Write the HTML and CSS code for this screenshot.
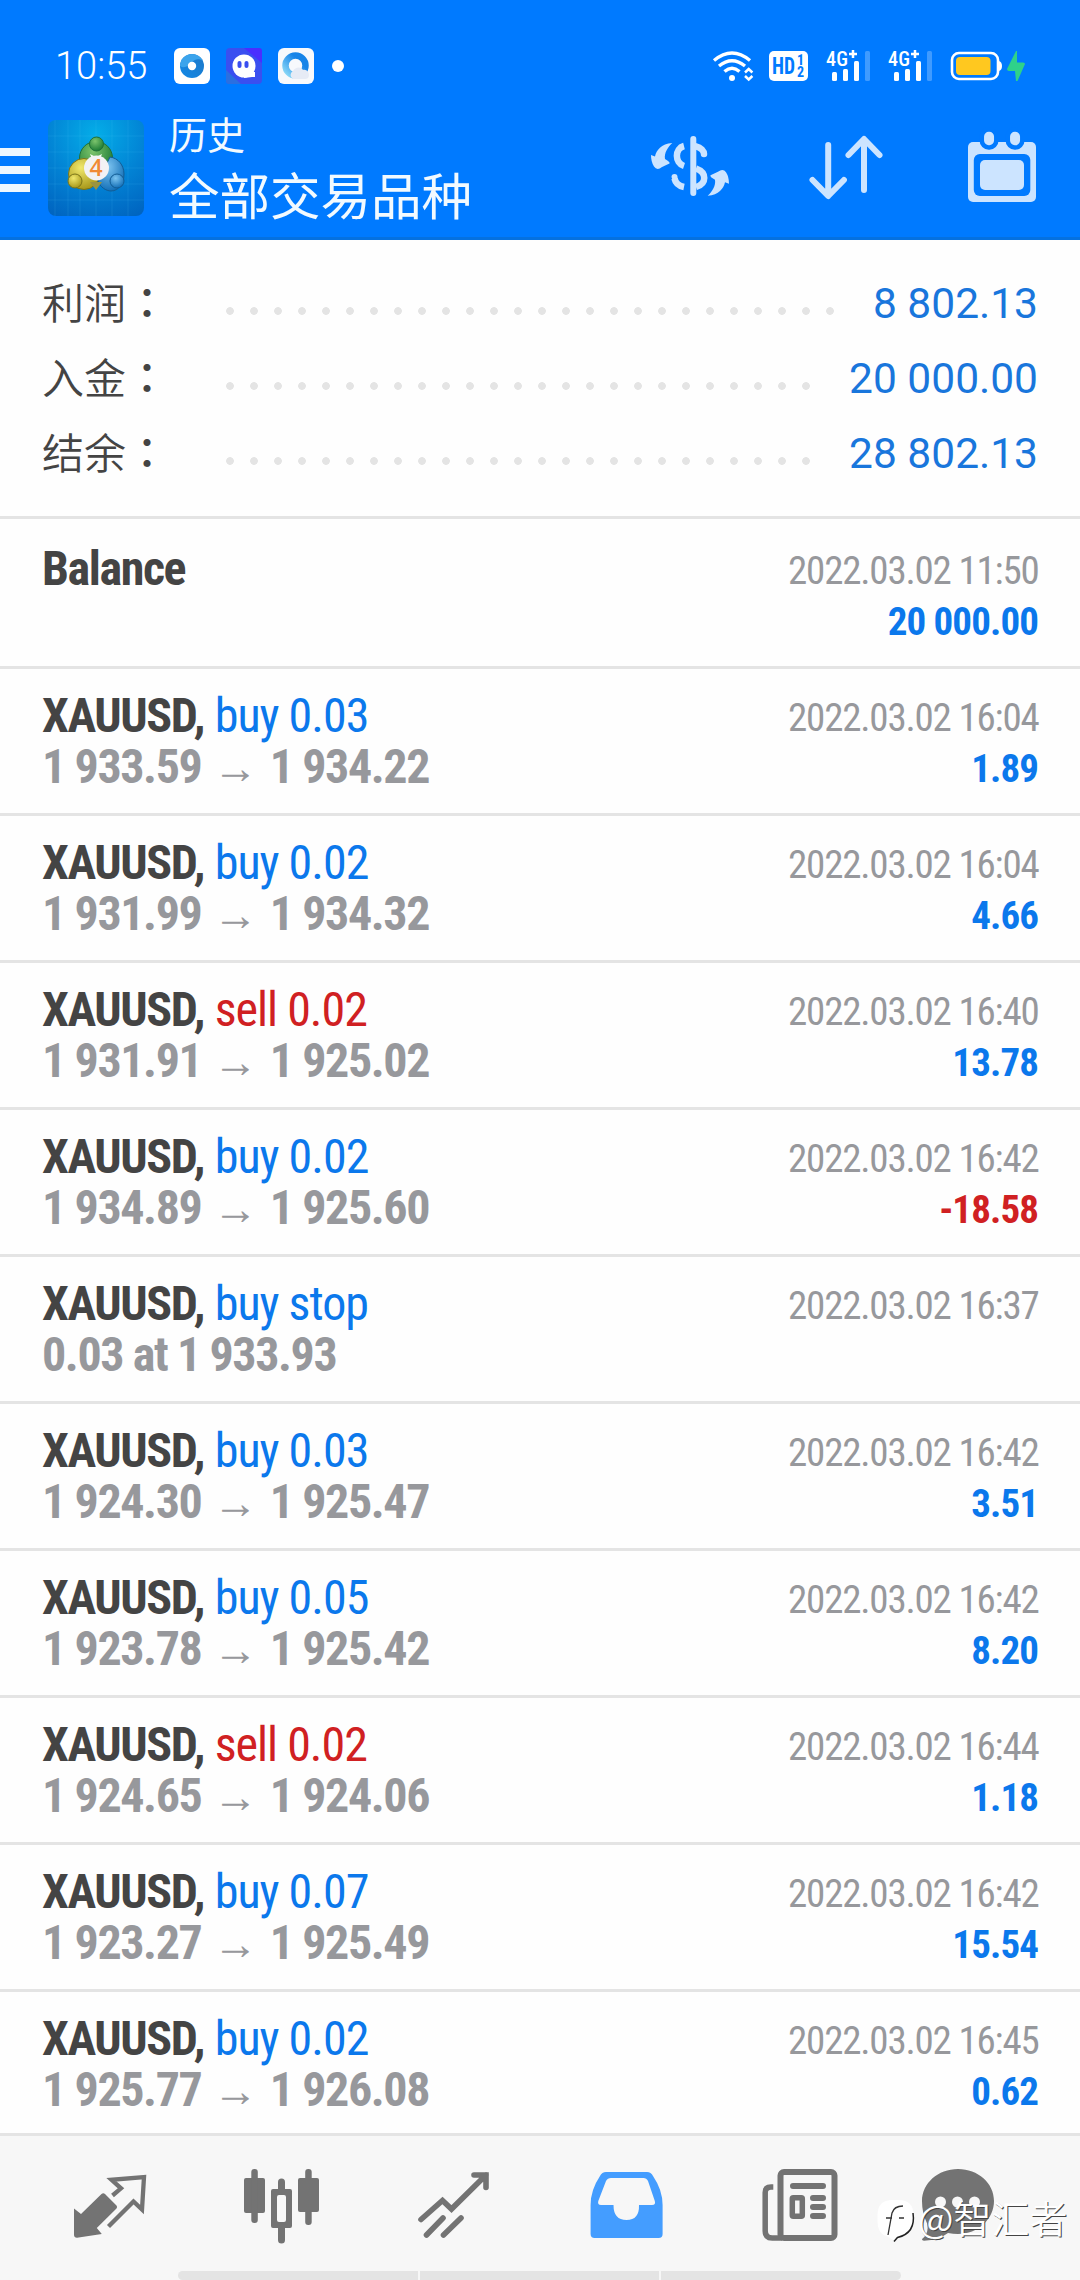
FILE: index.html
```html
<!DOCTYPE html>
<html lang="zh-CN">
<head>
<meta charset="utf-8">
<title>历史</title>
<link rel="stylesheet" href="styles.css">
</head>
<body>
<div class="screen">
  <header class="header">
    <div class="status">
      <span class="clock">10:55</span>
      <div class="notices">
        <svg width="36" height="36" viewBox="0 0 36 36"><defs><linearGradient id="ring" x1="1" y1="0" x2="0" y2="1"><stop offset="0" stop-color="#1d78c8"/><stop offset="1" stop-color="#1389e6"/></linearGradient></defs><rect width="36" height="36" rx="6" fill="#fff"/><circle cx="18" cy="18" r="12" fill="url(#ring)"/><path d="M6 18a12 12 0 0 1 12-12c5 0 9 3 11 7-4-3-8-2-11 1-3 4-8 7-12 4z" fill="#3ba4ec"/><circle cx="18" cy="18" r="4.2" fill="#fff"/></svg>
        <svg width="36" height="36" viewBox="0 0 36 36"><rect width="36" height="36" rx="4" fill="#3a4ff0"/><path d="M33 0h-15l18 15V3a3 3 0 0 0-3-3z" fill="#4a2eff"/><path d="M0 22v11a3 3 0 0 0 3 3h12z" fill="#2b6fe0"/><circle cx="18" cy="18" r="11.5" fill="#fff"/><path d="M18 24h11v5h-3l-8 1z" fill="#fff"/><rect x="11.5" y="13" width="4" height="7" rx="2" fill="#3a4ff0"/><rect x="18.5" y="13" width="4" height="7" rx="2" fill="#3a4ff0"/></svg>
        <svg width="36" height="36" viewBox="0 0 36 36"><defs><linearGradient id="q" x1="1" y1="0" x2="0" y2="1"><stop offset="0.3" stop-color="#1784e8"/><stop offset="1" stop-color="#8fdcf8"/></linearGradient></defs><rect width="36" height="36" rx="6" fill="#f7f9fc"/><circle cx="17.5" cy="17.5" r="10" fill="none" stroke="url(#q)" stroke-width="6.5"/><path d="M15 31a4.500 4.500 0 0 1 0-8c2-4 8-5 10-1 4-1 6 3 6 5 0 3-2 4-4 4z" fill="#e6ebf5"/></svg>
        <i class="more"></i>
      </div>
      <div class="signals">
        <svg width="42" height="32" viewBox="712 50 42 32"><g fill="none" stroke="#fff" stroke-width="3.400"><path d="M714 60.500Q732 45.500 750 60.500"/><path d="M719 66Q732 55.500 745 66"/><path d="M724.500 71.500Q732 65 739.500 71.500"/></g><circle cx="732" cy="78" r="3" fill="#fff"/><g fill="none" stroke="#fff" stroke-width="2.500"><path d="M745 72.500l3.700-3.500 3.700 3.500M745 76l3.700 3.500 3.700-3.500"/></g></svg>
        <svg class="hd" width="39" height="30" viewBox="0 0 39 30"><rect width="39" height="30" rx="5" fill="#fff"/><g fill="#007aff"><text x="3" y="23" font-size="23" textLength="23" lengthAdjust="spacingAndGlyphs">HD</text><text x="28" y="14" font-size="14">1</text><text x="28" y="26" font-size="14">2</text></g></svg>
        <svg class="cell" width="45" height="32" viewBox="825 50 45 32"><text x="826" y="66" font-size="20" fill="#fff" textLength="22">4G</text><path d="M849 54h8M853 50v8" stroke="#fff" stroke-width="2.500"/><g fill="#fff"><rect x="832" y="72" width="5" height="9" rx="1.500"/><rect x="843" y="69" width="5" height="12" rx="1.500"/><rect x="854" y="61" width="5" height="20" rx="1.500"/><rect x="865" y="51" width="5" height="30" rx="1.500" opacity=".25"/></g></svg>
        <svg class="cell" width="45" height="32" viewBox="825 50 45 32"><text x="826" y="66" font-size="20" fill="#fff" textLength="22">4G</text><path d="M849 54h8M853 50v8" stroke="#fff" stroke-width="2.500"/><g fill="#fff"><rect x="832" y="72" width="5" height="9" rx="1.500"/><rect x="843" y="69" width="5" height="12" rx="1.500"/><rect x="854" y="61" width="5" height="20" rx="1.500"/><rect x="865" y="51" width="5" height="30" rx="1.500" opacity=".25"/></g></svg>
        <svg width="76" height="32" viewBox="950 50 76 32"><rect x="952" y="53" width="46" height="26" rx="7" fill="none" stroke="#fff" stroke-width="2.600"/><path d="M999 61q3 1 3 5t-3 5z" fill="#fff"/><rect x="956" y="57" width="34.500" height="18" rx="4" fill="#ffc81f"/><path d="M1016 51l-9 18q0 2 2 2h6l1 10h1.500l7.500-17q0-1.500-2-1.500h-6v-11.500z" fill="#2fd18a"/></svg>
      </div>
    </div>
    <div class="appbar">
      <svg class="menu" width="30" height="44" viewBox="0 0 30 44" fill="#eef7ff"><path d="M0 0h30v8H0zM0 18h30v8H0zM0 36h30v8H0z"/></svg>
      <svg class="logo" width="96" height="96" viewBox="48 120 96 96">
        <defs>
          <radialGradient id="bg" cx=".5" cy=".15" r=".95"><stop offset="0" stop-color="#04ade8"/><stop offset=".55" stop-color="#0282d4"/><stop offset="1" stop-color="#0064c0"/></radialGradient>
          <radialGradient id="gr" cx=".4" cy=".3" r=".7"><stop offset="0" stop-color="#7cc46c"/><stop offset="1" stop-color="#1d7c35"/></radialGradient>
          <radialGradient id="ye" cx=".4" cy=".3" r=".7"><stop offset="0" stop-color="#f0e86c"/><stop offset="1" stop-color="#a8981a"/></radialGradient>
          <radialGradient id="bl" cx=".4" cy=".3" r=".7"><stop offset="0" stop-color="#7cc4f0"/><stop offset="1" stop-color="#1470b8"/></radialGradient>
        </defs>
        <rect x="48" y="120" width="96" height="96" rx="8" fill="url(#bg)"/>
        <path d="M55 120v96M68 120v96M80 120v96M96 120v96M112 120v96M128 120v96M48 136h96M48 152h96M48 168h96M48 184h96M48 200h96" stroke="#5cc8ff" stroke-opacity=".13" fill="none"/>
        <circle cx="96" cy="158" r="16.500" fill="url(#gr)" stroke="#1f7038"/>
        <circle cx="84" cy="174" r="15.500" fill="url(#ye)" stroke="#7a7418"/>
        <path d="M98 181c2 6 8 10 13 10 8 0 13-8 13-17s-6-16-14-17z" fill="url(#bl)" stroke="#125c94"/>
        <path d="M90 182h12l-6 8z" fill="#9a9440"/>
        <circle cx="75" cy="181" r="7" fill="url(#ye)" stroke="#7a7418"/>
        <circle cx="117" cy="181" r="7" fill="url(#bl)" stroke="#125c94"/>
        <circle cx="96.500" cy="144" r="7" fill="url(#gr)" stroke="#1f7038"/>
        <path d="M90 154l6 3 6-3-2 5h-8z" fill="#f2fff2"/>
        <circle cx="96.500" cy="168" r="12.500" fill="#f2f2f4"/>
        <text class="four" x="96" y="176" font-size="23" text-anchor="middle" fill="#f08a34">4</text>
      </svg>
      <div class="titles"><div class="sub">历史</div><div class="main">全部交易品种</div></div>
      <div class="actions">
        <svg width="156" height="90" viewBox="612 122 156 90"><rect x="690.300" y="136" width="6" height="60" rx="3" fill="#cce4ff"/><g fill="none" stroke="#cce4ff" stroke-width="6.500"><path d="M684 146C674.500 148.500 674.500 163 684 166"/><path d="M696 146.300C701 147.500 704 151 704 154" stroke-linecap="round"/><path d="M696 168.500C707 172.500 707 183.500 696 187"/><path d="M674.500 178.500C675.500 183 679 186 684 187"/></g><path d="M671.500 177a3 3 0 0 1 6 0v3h-5z" fill="#cce4ff"/><g fill="#cce4ff"><path id="turn" d="M672.300 143C661 144 656.500 150 655 156.500L651 155q0 7 3 11.500t8 0.500l7.500-3.500q1-1.500-4.500-4.500C664 153 668 147 672.300 143z"/><use href="#turn" transform="rotate(180 690 169.400)"/></g></svg>
        <svg width="156" height="90" viewBox="768 122 156 90" fill="none" stroke="#cce4ff" stroke-width="6" stroke-linecap="round" stroke-linejoin="round"><path d="M828.200 145v50M812.500 180l15.700 16 15.700-16M864 190v-50M848.500 155l15.500-16 15.500 16"/></svg>
        <svg width="156" height="90" viewBox="924 122 156 90"><rect x="968" y="142" width="68" height="60" rx="5" fill="#cce4ff"/><rect x="973.800" y="154" width="56.500" height="42" rx="6" fill="#007aff"/><rect x="980" y="160" width="44" height="30" rx="5" fill="#cce4ff"/><g fill="#cce4ff" stroke="#007aff" stroke-width="4.500"><rect x="981.800" y="129.500" width="14.500" height="18" rx="7"/><rect x="1007.800" y="129.500" width="14.500" height="18" rx="7"/></g></svg>
      </div>
    </div>
  </header>

  <section class="summary">
    <div class="sum"><span class="label">利润<b lang="zh-TW">：</b></span><i class="dots wide"></i><span class="value">8 802.13</span></div>
    <div class="sum"><span class="label">入金<b lang="zh-TW">：</b></span><i class="dots"></i><span class="value">20 000.00</span></div>
    <div class="sum"><span class="label">结余<b lang="zh-TW">：</b></span><i class="dots"></i><span class="value">28 802.13</span></div>
  </section>

  <main class="list">
    <div class="row first"><div class="deal"><div class="name">Balance</div></div><div class="info"><div class="date">2022.03.02 11:50</div><div class="profit">20 000.00</div></div></div>
    <div class="row"><div class="deal"><div class="name">XAUUSD, <span class="buy">buy 0.03</span></div><div class="price">1 933.59 <i>→</i> 1 934.22</div></div><div class="info"><div class="date">2022.03.02 16:04</div><div class="profit">1.89</div></div></div>
    <div class="row"><div class="deal"><div class="name">XAUUSD, <span class="buy">buy 0.02</span></div><div class="price">1 931.99 <i>→</i> 1 934.32</div></div><div class="info"><div class="date">2022.03.02 16:04</div><div class="profit">4.66</div></div></div>
    <div class="row"><div class="deal"><div class="name">XAUUSD, <span class="sell">sell 0.02</span></div><div class="price">1 931.91 <i>→</i> 1 925.02</div></div><div class="info"><div class="date">2022.03.02 16:40</div><div class="profit">13.78</div></div></div>
    <div class="row"><div class="deal"><div class="name">XAUUSD, <span class="buy">buy 0.02</span></div><div class="price">1 934.89 <i>→</i> 1 925.60</div></div><div class="info"><div class="date">2022.03.02 16:42</div><div class="profit loss">-18.58</div></div></div>
    <div class="row"><div class="deal"><div class="name">XAUUSD, <span class="buy">buy stop</span></div><div class="price">0.03 at 1 933.93</div></div><div class="info"><div class="date">2022.03.02 16:37</div></div></div>
    <div class="row"><div class="deal"><div class="name">XAUUSD, <span class="buy">buy 0.03</span></div><div class="price">1 924.30 <i>→</i> 1 925.47</div></div><div class="info"><div class="date">2022.03.02 16:42</div><div class="profit">3.51</div></div></div>
    <div class="row"><div class="deal"><div class="name">XAUUSD, <span class="buy">buy 0.05</span></div><div class="price">1 923.78 <i>→</i> 1 925.42</div></div><div class="info"><div class="date">2022.03.02 16:42</div><div class="profit">8.20</div></div></div>
    <div class="row"><div class="deal"><div class="name">XAUUSD, <span class="sell">sell 0.02</span></div><div class="price">1 924.65 <i>→</i> 1 924.06</div></div><div class="info"><div class="date">2022.03.02 16:44</div><div class="profit">1.18</div></div></div>
    <div class="row"><div class="deal"><div class="name">XAUUSD, <span class="buy">buy 0.07</span></div><div class="price">1 923.27 <i>→</i> 1 925.49</div></div><div class="info"><div class="date">2022.03.02 16:42</div><div class="profit">15.54</div></div></div>
    <div class="row last"><div class="deal"><div class="name">XAUUSD, <span class="buy">buy 0.02</span></div><div class="price">1 925.77 <i>→</i> 1 926.08</div></div><div class="info"><div class="date">2022.03.02 16:45</div><div class="profit">0.62</div></div></div>
  </main>

  <footer class="footer">
    <nav class="tabs">
      <svg width="172" height="135" viewBox="24 2136 172 135"><path d="M74 2208.500l7 5.500L101.500 2194q1.800-1.500 3.500 0L116.500 2205.500q1.200 1.500 0 3L96.800 2228l5 6L77 2237.800q-3 0-3-3z" fill="#737373"/><path d="M112.500 2195.500L121 2188.300 111.500 2179.800 144 2177 142 2209.500 133.500 2201.500 108.500 2226.500" fill="none" stroke="#737373" stroke-width="4.300"/></svg>
      <svg width="172" height="135" viewBox="196 2136 172 135"><g fill="#737373"><rect x="244" y="2178" width="21" height="35" rx="2"/><rect x="251.300" y="2169" width="6.500" height="54" rx="3"/><path fill-rule="evenodd" d="M273 2189h17a2 2 0 0 1 2 2v35a2 2 0 0 1-2 2h-17a2 2 0 0 1-2-2v-35a2 2 0 0 1 2-2zm6 6q-2 0-2 2v23q0 2 2 2h5q2 0 2-2v-23q0-2-2-2z"/><path d="M278 2190v-8a3.300 3.300 0 0 1 7 0v8zM278 2227v13a3.300 3.300 0 0 0 7 0v-13z"/><rect x="298" y="2178" width="21" height="34" rx="2"/><rect x="305.200" y="2169" width="6.500" height="56" rx="3"/></g></svg>
      <svg width="172" height="135" viewBox="368 2136 172 135" fill="none" stroke="#737373" stroke-width="5.600" stroke-linecap="round"><path d="M421 2219.500L442.500 2200.500 451.500 2209 486 2175M474 2175h12v12.500"/><path d="M426.500 2235L443 2218M443.500 2235L461 2218"/></svg>
      <svg width="172" height="135" viewBox="540 2136 172 135"><path fill-rule="evenodd" fill="#449dff" d="M606 2172h41q4 0 6 4 9.600 14 9.600 29v29q0 4-4 4h-64q-4 0-4-4v-29q0-15 9.400-29 2-4 6-4zM611 2178q-3.500 0-5 3L598.300 2201q-1 4 2.700 4h12.500q0 15 13 15t12.500-15h13q4 0 2.800-4L648 2181q-1.500-3-4.500-3z"/></svg>
      <svg width="172" height="135" viewBox="712 2136 172 135" fill="none" stroke="#737373"><rect x="780.500" y="2172" width="54" height="66" rx="3.500" stroke-width="6"/><path d="M773.300 2187H771q-5.800 0-5.800 5.500v38.500q0 7 7 7h10" stroke-width="5.500"/><path d="M793 2186h30M813 2198h10M813 2207h10M813 2216h10" stroke-width="6" stroke-linecap="round"/><rect x="792.300" y="2197.800" width="10" height="18.400" rx="1" stroke-width="5.500"/></svg>
      <svg width="172" height="135" viewBox="884 2136 172 135"><path fill="#737373" d="M958 2169c20 0 36 14 36 32s-16 33-36 33q-5 0-10-1-9 7-24 7.700-4-1 0-3.500 5-5 3-14-5-10-5-22c0-18 16-32.200 36-32.200z"/><g fill="#f7f7f7"><circle cx="940.500" cy="2202" r="5.500"/><circle cx="957.500" cy="2202" r="5.500"/><circle cx="974.500" cy="2202" r="5.500"/></g></svg>
    </nav>
    <div class="scroll"><i></i><i></i><i></i></div>
  </footer>
  <div class="watermark">
    <svg width="40" height="46" viewBox="876 2199 40 46"><path d="M895 2242l3-3c10-3 15.500-8 15.500-19v-4q0-15-15-15h-6q-15 0-15 15v6q0 10 6 14l3 1z" fill="#fff"/><path d="M913 2214q3 20-15.500 24.500l-3.500 4" fill="none" stroke="#222" stroke-width="1.500"/><path d="M888 2236l4-22q2-7 11-7M886 2219h6M899 2219h5" fill="none" stroke="#333" stroke-width="1.300"/></svg>
    <span>@智汇者</span>
  </div>
</div>
</body>
</html>
```
FILE: styles.css
```css
* { box-sizing: border-box; }
body { margin: 0; background: #fff; font-family: Roboto, "Noto Sans CJK SC", sans-serif; }
svg { display: block; flex: none; overflow: visible; }
.screen { position: relative; width: 1080px; height: 2280px; display: flex; flex-direction: column; background: #fefefe; overflow: hidden; }

.header { flex: none; height: 240px; background: #007aff; border-bottom: 3px solid #0571e0; }
.status { display: flex; align-items: center; height: 90px; padding: 42px 54px 0 55px; }
.clock { width: 119px; font-size: 38px; font-weight: 350; line-height: 48px; color: #fff; }
.notices { display: flex; align-items: center; gap: 16px; }
.more { width: 12px; height: 12px; border-radius: 50%; background: #fff; margin-left: 2px; }
.signals { display: flex; align-items: center; gap: 17px; margin-left: auto; }
.signals svg:first-child { margin-right: -2px; }
.signals svg:last-child { margin-left: 1px; }
.hd text, .cell text { font-family: "Roboto Condensed", Roboto, sans-serif; font-weight: 700; }
.cell text { font-weight: 500; }
.four { font-family: "Open Sans", sans-serif; font-weight: 600; }

.appbar { display: flex; align-items: flex-start; padding-top: 15px; }
.menu { margin: 43px 18px 0 0; }
.logo { margin-top: 15px; }
.titles { margin-left: 25px; color: #f2faff; font-family: "Noto Sans CJK SC", sans-serif; font-weight: 400; white-space: nowrap; }
.sub { font-size: 38px; line-height: 56px; }
.main { font-size: 50.500px; line-height: 65px; }
.actions { display: flex; margin: 17px 0 0 auto; }

.summary { flex: none; height: 279px; padding: 26px 42px 0; border-bottom: 3px solid #e4e4e4; }
.sum { display: flex; align-items: center; height: 75px; }
.label { width: 184px; margin-top: -5px; font-family: "Noto Sans CJK SC", sans-serif; font-size: 42px; font-weight: 350; line-height: 60px; color: #444; }
.label b { font-family: "Noto Sans CJK TC", sans-serif; font-weight: 500; }
.dots { width: 600px; height: 8px; margin-top: 15px; background: radial-gradient(circle at 4px 4px, #e4e4e4 3.500px, transparent 4.200px) 0 0 / 24px 8px; }
.dots.wide { width: 624px; }
.value { margin-left: auto; font-size: 42.500px; line-height: 50px; color: #1976dc; }

.list { display: flex; flex: none; flex-direction: column; }
.row { display: flex; justify-content: space-between; height: 147px; padding: 21px 42px 0 42px; border-bottom: 3px solid #e4e4e4; font-family: "Roboto Condensed", Roboto, sans-serif; line-height: 51px; white-space: nowrap; }
.row.first { height: 150px; padding-top: 24px; }
.row.last { height: 141px; border-bottom: 0; }
.name, .price { font-size: 48px; font-weight: 700; letter-spacing: -1.400px; }
.name { color: #444; }
.buy, .sell { margin-left: 1px; font-weight: 400; letter-spacing: -1px; }
.buy { color: #0b78ec; }
.sell { color: #d02022; }
.price { color: #97989c; }
.price i { display: inline-block; width: 49px; font: 400 45px "Liberation Sans", sans-serif; line-height: 40px; letter-spacing: 0; text-align: center; }
.info { padding-top: 3px; text-align: right; font-size: 39px; }
.date { margin-right: -.5px; color: #97989c; letter-spacing: -1.200px; }
.profit { color: #0b78ec; font-weight: 700; letter-spacing: -.9px; }
.profit.loss { color: #d02022; }

.footer { flex: 1; border-top: 3px solid #e4e4e4; background: #f7f7f7; }
.tabs { display: flex; height: 135px; padding: 0 24px; }
.scroll { display: flex; gap: 2px; width: 723px; height: 9px; margin-left: 178px; border-radius: 5px; overflow: hidden; }
.scroll i { flex: 1; background: #e4e4e4; }
.watermark { position: absolute; left: 876px; top: 2190px; display: flex; align-items: center; gap: 2px; height: 62px; color: #fff; font: 350 38px/56px "Noto Sans CJK SC", sans-serif; text-shadow: 1px 1px 0 #444; white-space: nowrap; }
.watermark span { margin-top: -9px; }
```
